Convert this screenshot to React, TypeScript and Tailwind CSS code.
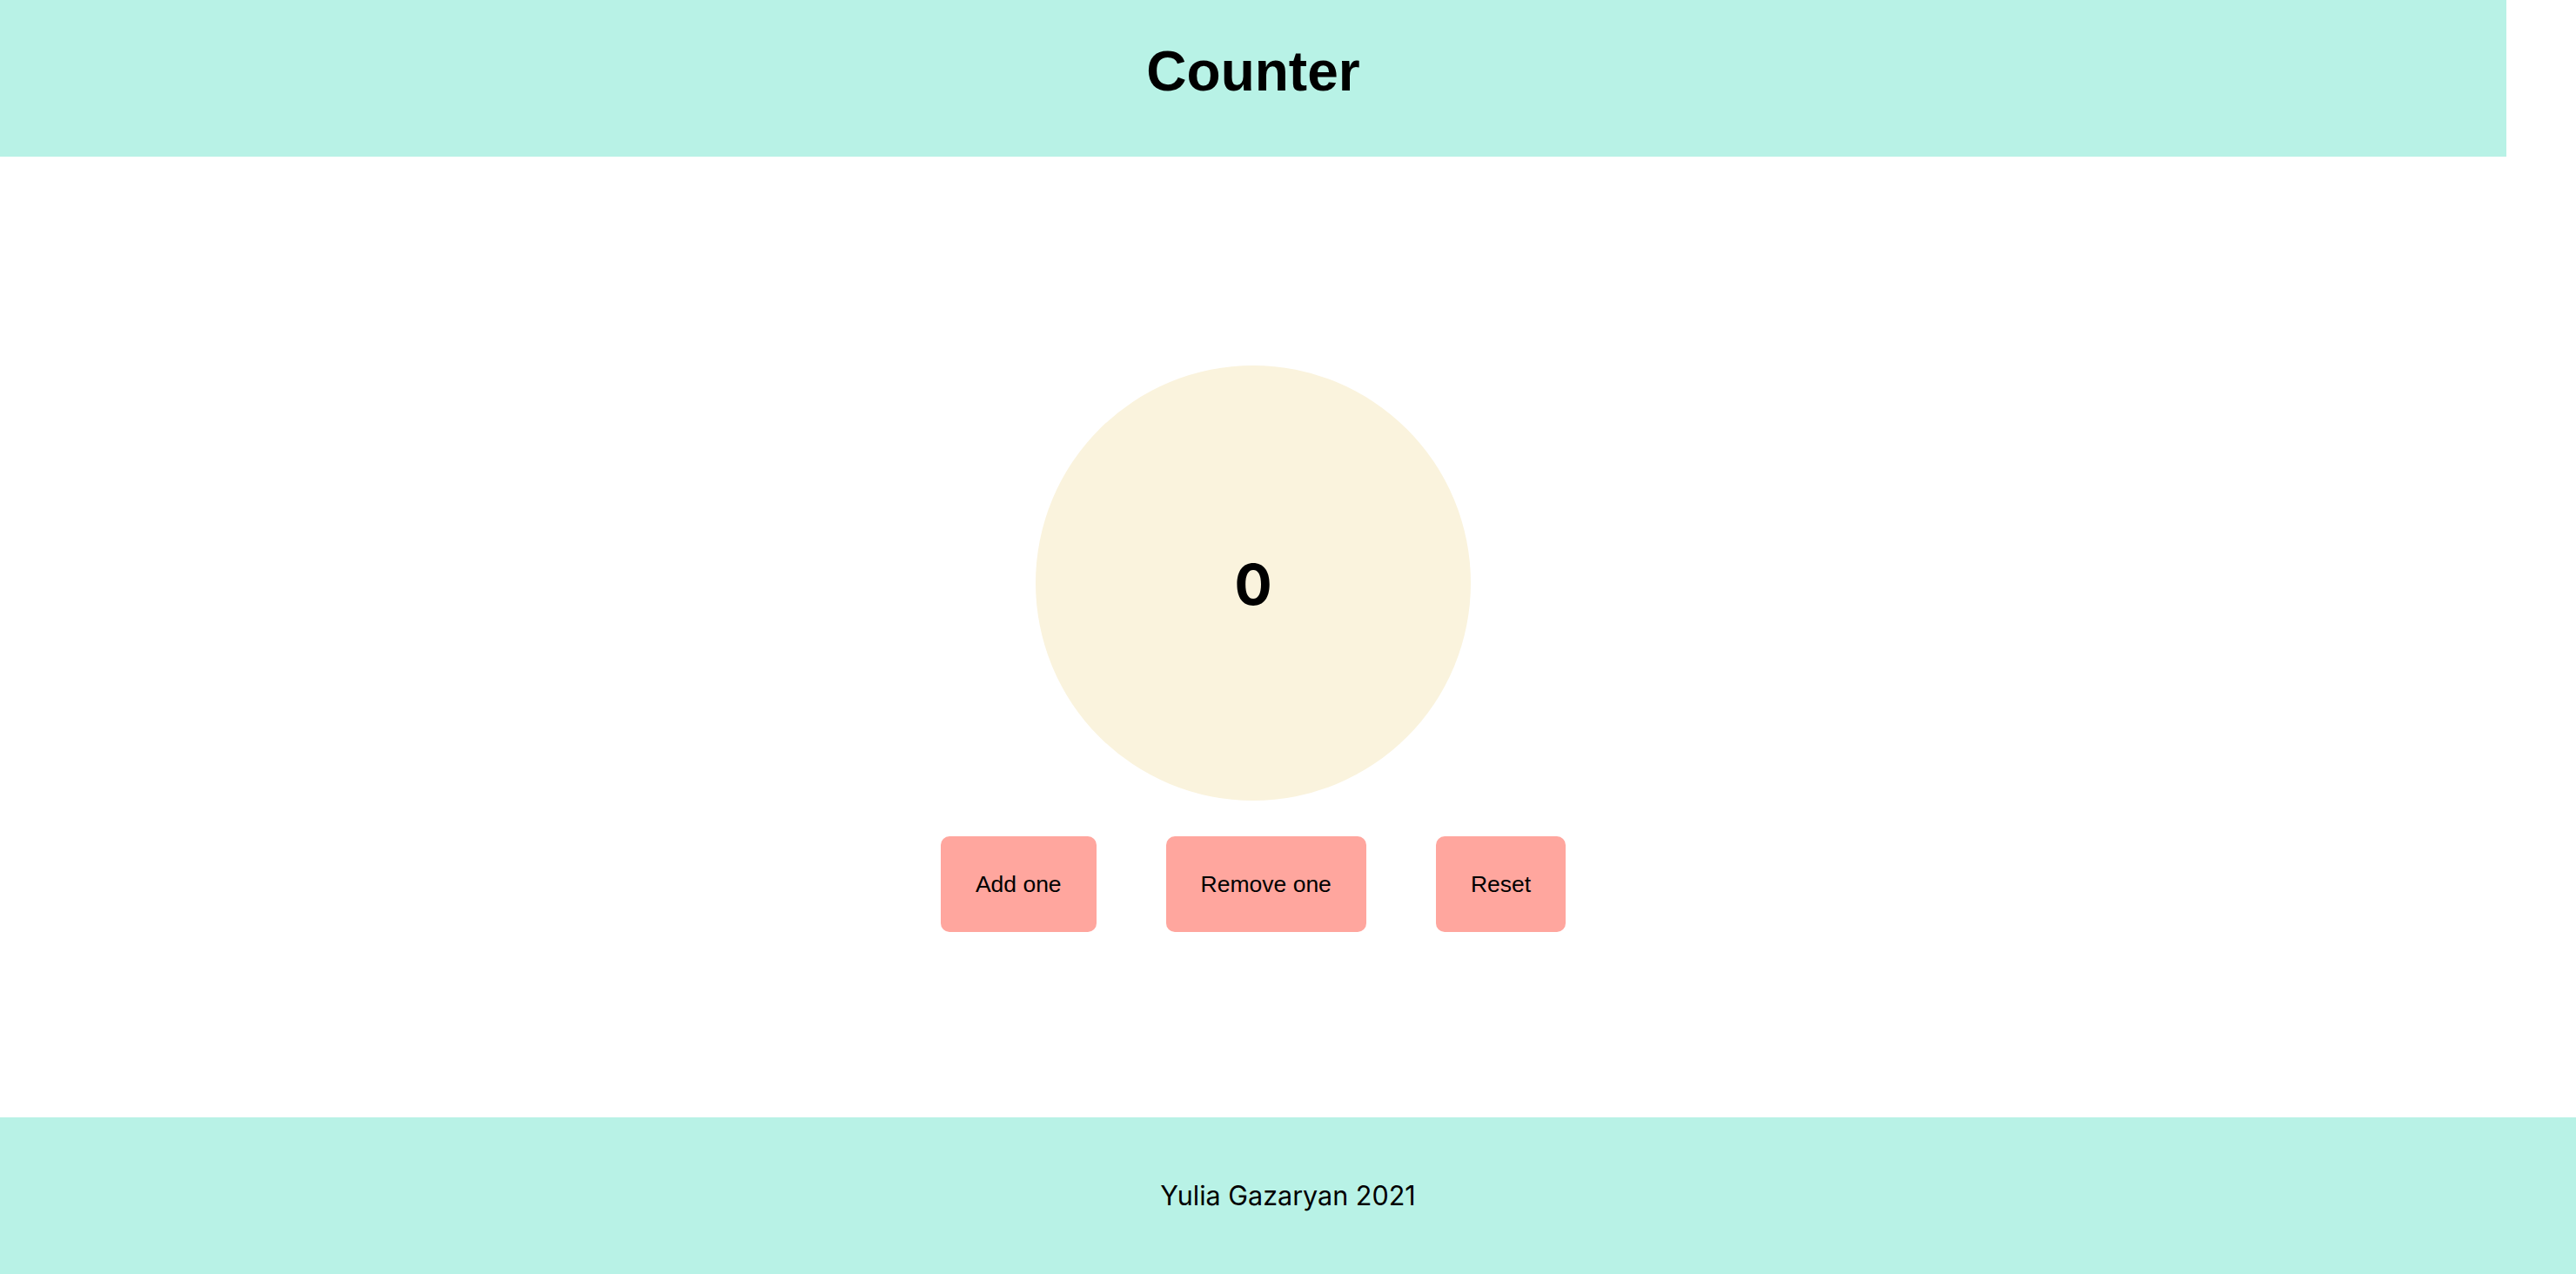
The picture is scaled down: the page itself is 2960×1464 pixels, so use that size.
import React, { useState } from "react";

export default function App() {
  const [count, setCount] = useState(0);
  return (
    <div className="flex h-[1464px] w-full flex-col bg-white text-black">
      <header className="h-[180px] w-[2880px] shrink-0 bg-[#b8f2e6] pt-[45px] text-center">
        <h1 className="font-['Liberation_Sans',Arial,sans-serif] text-[64px] font-bold leading-[74px]">
          Counter
        </h1>
      </header>
      <main className="flex w-[2880px] flex-1 flex-col items-center">
        <div className="mt-[240px] flex h-[500px] w-[500px] items-center justify-center rounded-full bg-[#faf3dd]">
          <span className="pt-[3px] font-['Inter',sans-serif] text-[64px] font-bold leading-none">
            {count}
          </span>
        </div>
        <div className="mt-[41px] flex gap-[80px]">
          <button
            onClick={() => setCount(count + 1)}
            className="rounded-[10px] bg-[#ffa69e] px-[40px] py-[40px] font-['Liberation_Sans',Arial,sans-serif] text-[26.5px] leading-[30px] text-black"
          >
            Add one
          </button>
          <button
            onClick={() => setCount(count - 1)}
            className="rounded-[10px] bg-[#ffa69e] px-[40px] py-[40px] font-['Liberation_Sans',Arial,sans-serif] text-[26.5px] leading-[30px] text-black"
          >
            Remove one
          </button>
          <button
            onClick={() => setCount(0)}
            className="rounded-[10px] bg-[#ffa69e] px-[40px] py-[40px] font-['Liberation_Sans',Arial,sans-serif] text-[26.5px] leading-[30px] text-black"
          >
            Reset
          </button>
        </div>
      </main>
      <footer className="flex h-[180px] w-full shrink-0 items-center justify-center bg-[#b8f2e6]">
        <p className="font-['Inter',sans-serif] text-[30.5px] leading-none">Yulia Gazaryan 2021</p>
      </footer>
    </div>
  );
}
